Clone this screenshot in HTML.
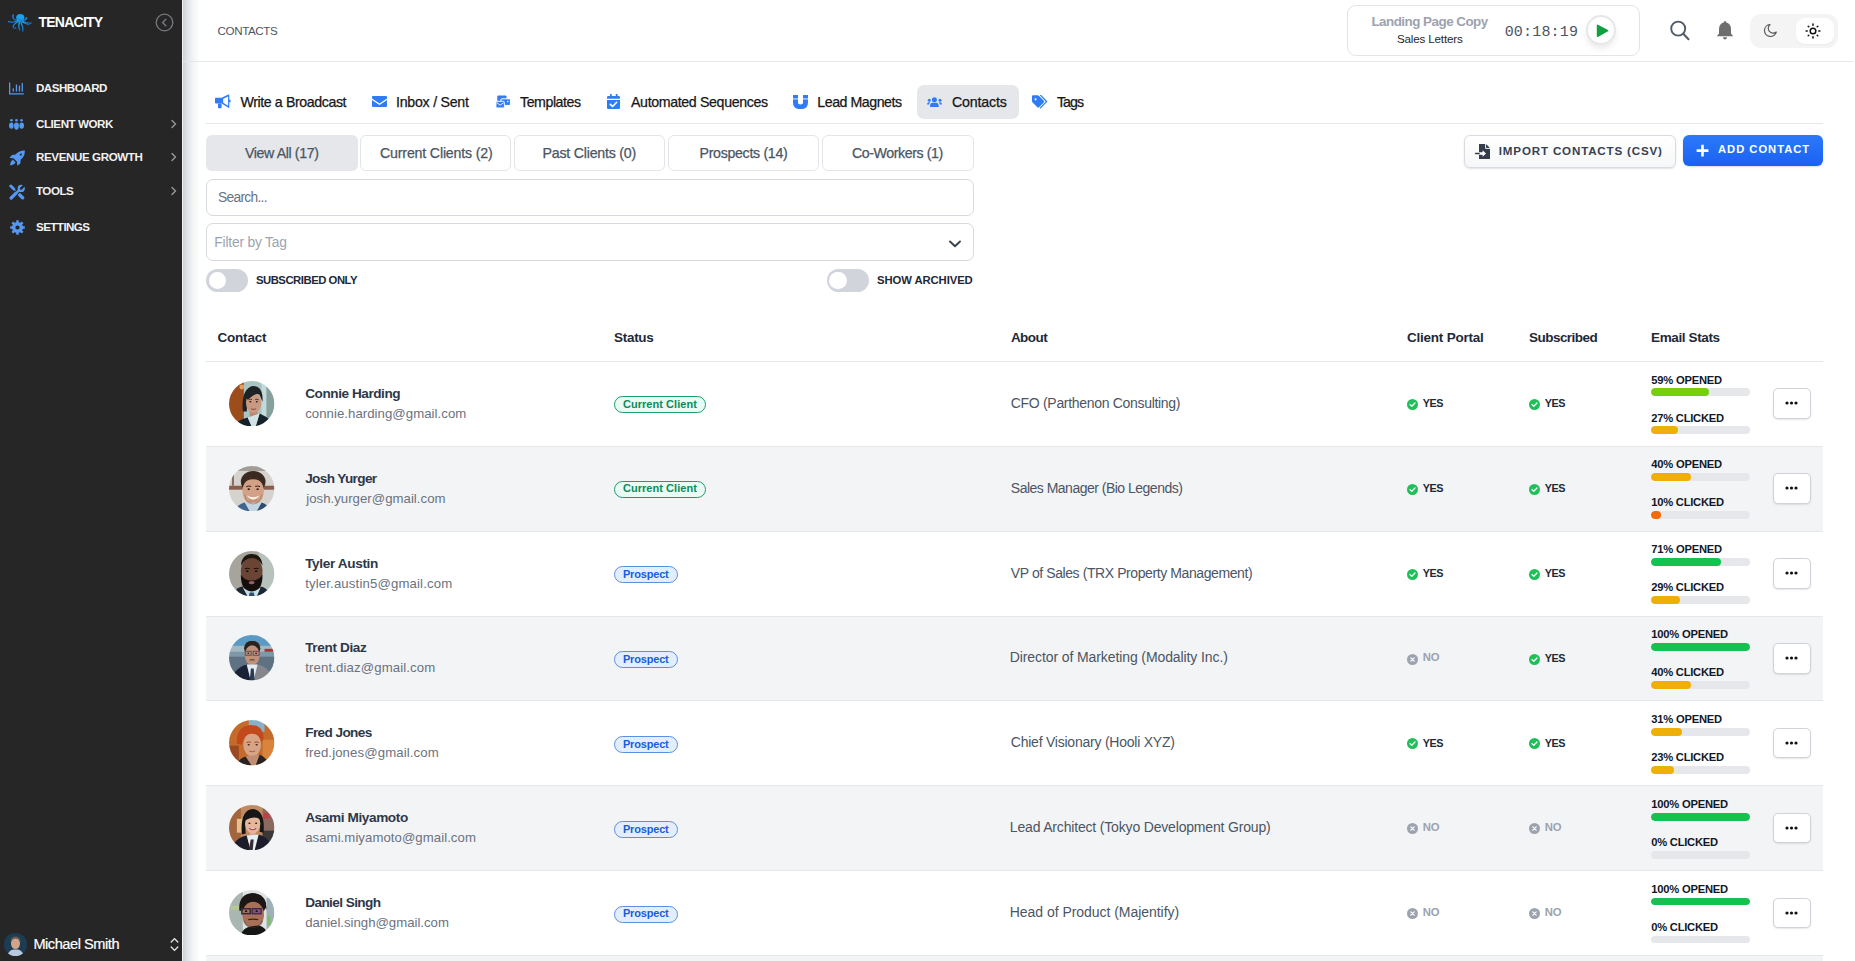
<!DOCTYPE html><html><head><meta charset="utf-8"><style>
*{margin:0;padding:0;box-sizing:border-box}
html,body{width:1855px;height:961px;overflow:hidden;background:#fff;font-family:"Liberation Sans",sans-serif}
.t{position:absolute;white-space:nowrap;line-height:1}
.a{position:absolute}
.av{position:absolute}
svg{display:block}
</style></head><body>
<div class="a" style="left:0;top:0;width:182px;height:961px;background:#262626"></div>
<div class="a" style="left:182px;top:0;width:1px;height:961px;background:#f4f4f4"></div>
<div class="a" style="left:183px;top:0;width:17px;height:961px;background:linear-gradient(90deg,#cdd0d7 0%,#e1e4ea 25%,#f1f3f3 55%,rgba(255,255,255,0) 100%)"></div>
<svg class="a" style="left:8px;top:13.5px" width="24" height="18" viewBox="0 0 24 18"><defs><linearGradient id="og" x1="0" y1="0" x2="0" y2="1"><stop offset="0" stop-color="#22aef5"/><stop offset="1" stop-color="#1668c4"/></linearGradient></defs><g fill="none" stroke="url(#og)" stroke-width="1.25" stroke-linecap="round">
<path d="M10 5.5 Q6.5 7 5.2 4 Q4.6 2 5.2 1"/><path d="M10 6.5 Q5 9.5 0.6 7.6"/><path d="M10.6 7.5 Q6 9.5 5.2 12.5 Q5.5 14.8 7.8 14"/><path d="M11.4 8.5 Q9.8 12.5 11.8 16"/><path d="M13 8.8 Q15.2 12.5 14.8 17.2"/><path d="M14 8 Q18.5 10.2 21 10.6"/><path d="M14.6 6.6 Q17.5 6.6 18.7 3.8"/><path d="M14.8 7.6 Q19.5 9.6 23.2 9.2"/></g>
<ellipse cx="12.3" cy="3.6" rx="4.1" ry="3.5" fill="#18a2ef"/><path d="M9.3 4.8 Q12.3 12 15.3 4.8Z" fill="#1a8fe0"/></svg>
<div class="t" style="left:38.50px;top:14.78px;font-size:14px;font-weight:700;color:#ffffff;letter-spacing:-0.766px;font-family:'Liberation Sans', sans-serif;">TENACITY</div>
<svg class="a" style="left:155px;top:13px" width="19" height="19" viewBox="0 0 19 19"><circle cx="9.5" cy="9.5" r="8.3" fill="none" stroke="#76797e" stroke-width="1.3"/><path d="M10.8 6.2 L7.6 9.5 L10.8 12.8" fill="none" stroke="#76797e" stroke-width="1.4" stroke-linecap="round"/></svg>
<div class="t" style="left:36.00px;top:82.06px;font-size:11.6px;font-weight:700;color:#f2f2f2;letter-spacing:-0.498px;font-family:'Liberation Sans', sans-serif;">DASHBOARD</div>
<div class="t" style="left:36.00px;top:118.06px;font-size:11.6px;font-weight:700;color:#f2f2f2;letter-spacing:-0.442px;font-family:'Liberation Sans', sans-serif;">CLIENT WORK</div>
<svg class="a" style="left:170px;top:119px" width="8" height="10" viewBox="0 0 8 10"><path d="M2 1.5 L5.5 5 L2 8.5" fill="none" stroke="#9a9ca0" stroke-width="1.3" stroke-linecap="round"/></svg>
<div class="t" style="left:36.00px;top:151.06px;font-size:11.6px;font-weight:700;color:#f2f2f2;letter-spacing:-0.400px;font-family:'Liberation Sans', sans-serif;">REVENUE GROWTH</div>
<svg class="a" style="left:170px;top:152px" width="8" height="10" viewBox="0 0 8 10"><path d="M2 1.5 L5.5 5 L2 8.5" fill="none" stroke="#9a9ca0" stroke-width="1.3" stroke-linecap="round"/></svg>
<div class="t" style="left:36.00px;top:185.06px;font-size:11.6px;font-weight:700;color:#f2f2f2;letter-spacing:-0.498px;font-family:'Liberation Sans', sans-serif;">TOOLS</div>
<svg class="a" style="left:170px;top:186px" width="8" height="10" viewBox="0 0 8 10"><path d="M2 1.5 L5.5 5 L2 8.5" fill="none" stroke="#9a9ca0" stroke-width="1.3" stroke-linecap="round"/></svg>
<div class="t" style="left:36.00px;top:221.06px;font-size:11.6px;font-weight:700;color:#f2f2f2;letter-spacing:-0.563px;font-family:'Liberation Sans', sans-serif;">SETTINGS</div>
<svg class="a" style="left:9px;top:82px" width="15" height="13" viewBox="0 0 15 13"><path d="M0.65 0.5 V11.9 H14.8" fill="none" stroke="#5598f2" stroke-width="1.3"/><rect x="3.6" y="6.3" width="1.3" height="3.3" fill="#5598f2"/><rect x="6.8" y="2.5" width="1.3" height="7.1" fill="#5598f2"/><rect x="9.8" y="3.6" width="1.3" height="6" fill="#5598f2"/><rect x="12.6" y="1" width="1.3" height="8.6" fill="#5598f2"/></svg>
<svg class="a" style="left:9px;top:119px" width="15" height="11" viewBox="0 0 15 11"><g fill="#5598f2"><circle cx="2.5" cy="1.3" r="1.3"/><circle cx="7.5" cy="1.3" r="1.3"/><circle cx="12.5" cy="1.3" r="1.3"/><path d="M0 6.5 Q0 3.6 2.5 3.6 Q4.6 3.6 4.6 6.5 Q4.6 9.8 2.5 9.8 Q0 9.8 0 6.5Z"/><path d="M10.4 6.5 Q10.4 3.6 12.5 3.6 Q15 3.6 15 6.5 Q15 9.8 12.5 9.8 Q10.4 9.8 10.4 6.5Z"/><path d="M5.1 6.6 Q5.1 3.6 7.5 3.6 Q9.9 3.6 9.9 6.6 Q9.9 10.8 7.5 10.8 Q5.1 10.8 5.1 6.6Z"/></g></svg>
<svg class="a" style="left:8.5px;top:149.5px" width="16.5" height="16" viewBox="0 0 16 16"><path fill="#5598f2" fill-rule="evenodd" d="M15.6 0.4 Q10 0.2 6.3 4.6 L2.6 4.9 L0.3 8 L4.3 8.3 L7.7 11.7 L8 15.7 L11.1 13.4 L11.4 9.7 Q15.8 6 15.6 0.4Z M11.6 3.4 A1 1 0 1 0 11.601 3.4Z"/><path d="M3.6 9.6 L6.4 12.4 Q5 14.6 2 15.3 L0.7 15.3 Q1.2 11.3 3.6 9.6Z" fill="#5598f2"/></svg>
<svg class="a" style="left:8.5px;top:183.5px" width="16" height="16" viewBox="0 0 16 16"><g fill="none" stroke-linecap="round"><path d="M1.8 2 L4.6 4.8" stroke="#5598f2" stroke-width="3"/><path d="M4.6 4.8 L9.6 9.8" stroke="#5598f2" stroke-width="1.3"/><path d="M10.4 10.6 L13.6 13.8" stroke="#5598f2" stroke-width="3.4"/><path d="M2.2 14 L6.6 9.6 L10.5 5.8" stroke="#262626" stroke-width="4.6"/><path d="M2.2 14 L6.6 9.6" stroke="#5598f2" stroke-width="3.3"/><path d="M6.6 9.6 L10.5 5.8" stroke="#5598f2" stroke-width="2.4"/></g><circle cx="12.2" cy="4.4" r="3.6" fill="#5598f2"/><path d="M12 4.6 L15.5 1.1" stroke="#262626" stroke-width="2.3" stroke-linecap="round"/></svg>
<svg class="a" style="left:9.5px;top:220px" width="15" height="15" viewBox="0 0 15 15"><path fill="#5598f2" fill-rule="evenodd" d="M12.85 6.24 L14.80 6.29 L14.80 8.71 L12.85 8.76 L12.18 10.39 L13.52 11.80 L11.80 13.52 L10.39 12.18 L8.76 12.85 L8.71 14.80 L6.29 14.80 L6.24 12.85 L4.61 12.18 L3.20 13.52 L1.48 11.80 L2.82 10.39 L2.15 8.76 L0.20 8.71 L0.20 6.29 L2.15 6.24 L2.82 4.61 L1.48 3.20 L3.20 1.48 L4.61 2.82 L6.24 2.15 L6.29 0.20 L8.71 0.20 L8.76 2.15 L10.39 2.82 L11.80 1.48 L13.52 3.20 L12.18 4.61Z M9.60 7.50 A2.1 2.1 0 1 0 5.40 7.50 A2.1 2.1 0 1 0 9.60 7.50Z"/></svg>
<svg class="av" style="left:4.00px;top:932.50px" width="23.00" height="23.00" viewBox="0 0 46 46"><defs><clipPath id="cp1"><circle cx="23" cy="23" r="23"/></clipPath><filter id="bl1" x="-5%" y="-5%" width="110%" height="110%"><feGaussianBlur stdDeviation="0.55"/></filter></defs><g clip-path="url(#cp1)"><g filter="url(#bl1)"><rect width="46" height="46" fill="#1c3a55"/><ellipse cx="23" cy="21" rx="9" ry="11" fill="#d2a48a"/><path d="M13 18 Q13 7 23 7 Q33 7 33 18 Q30 11 23 11 Q16 11 13 18Z" fill="#6b5a48"/><path d="M6 46 Q9 35 18 33 L28 33 Q37 35 40 46Z" fill="#b7c9dc"/></g></g></svg>
<div class="t" style="left:33.40px;top:936.69px;font-size:14.6px;font-weight:400;color:#ffffff;letter-spacing:-0.461px;font-family:'Liberation Sans', sans-serif;-webkit-text-stroke:0.2px #fff">Michael Smith</div>
<svg class="a" style="left:170px;top:937px" width="9" height="15" viewBox="0 0 9 15"><path d="M1.2 5 L4.5 1.6 L7.8 5 M1.2 10 L4.5 13.4 L7.8 10" fill="none" stroke="#e8e8e8" stroke-width="1.3" stroke-linecap="round"/></svg>
<div class="a" style="left:183px;top:61px;width:1670px;height:1px;background:#e5e7eb"></div>
<div class="t" style="left:217.60px;top:25.16px;font-size:11.6px;font-weight:400;color:#4b5563;letter-spacing:-0.396px;font-family:'Liberation Sans', sans-serif;">CONTACTS</div>
<div class="a" style="left:1347px;top:5px;width:293px;height:51px;border:1px solid #e2e4e8;border-radius:9px"></div>
<div class="t" style="left:1371.40px;top:15.38px;font-size:13.4px;font-weight:700;color:#9ca3af;letter-spacing:-0.509px;font-family:'Liberation Sans', sans-serif;">Landing Page Copy</div>
<div class="t" style="left:1397.00px;top:33.16px;font-size:11.6px;font-weight:400;color:#1f1f1f;letter-spacing:-0.156px;font-family:'Liberation Sans', sans-serif;">Sales Letters</div>
<div class="t" style="left:1504.70px;top:25.39px;font-size:15px;font-weight:400;color:#4b5563;letter-spacing:0.184px;font-family:'Liberation Mono', monospace;">00:18:19</div>
<div class="a" style="left:1587.6px;top:16.7px;width:26px;height:26px;border-radius:50%;background:#fff;box-shadow:0 0 0 2px #e6e7e9,0 4px 7px 1px rgba(0,0,0,.10)"></div>
<svg class="a" style="left:1595.5px;top:23.5px" width="13" height="14" viewBox="0 0 13 14"><path d="M1.6 1.4 L11.6 6.6 L1.6 12.2Z" fill="#0fa03f" stroke="#0fa03f" stroke-width="1.6" stroke-linejoin="round"/></svg>
<svg class="a" style="left:1668px;top:19px" width="24" height="24" viewBox="0 0 24 24"><circle cx="10.2" cy="9.6" r="7" fill="none" stroke="#525a66" stroke-width="1.9"/><path d="M15.3 14.8 L20.5 20.2" stroke="#525a66" stroke-width="2" stroke-linecap="round"/></svg>
<svg class="a" style="left:1715px;top:20px" width="20" height="21" viewBox="0 0 20 21"><path d="M10 1 Q11 1 11 2.3 Q16 3.5 16 9.5 V13.5 L18.2 16.2 H1.8 L4 13.5 V9.5 Q4 3.5 9 2.3 Q9 1 10 1Z" fill="#6e6e6e"/><path d="M7.8 17.3 H12.2 Q11.5 19.6 10 19.6 Q8.5 19.6 7.8 17.3Z" fill="#6e6e6e"/></svg>
<div class="a" style="left:1750px;top:13.5px;width:88px;height:34px;border-radius:11px;background:#f4f4f4"></div>
<div class="a" style="left:1795.5px;top:17.8px;width:38px;height:26.4px;border-radius:9px;background:#fff;box-shadow:0 1px 2px rgba(0,0,0,.04)"></div>
<svg class="a" style="left:1763px;top:23px" width="15" height="15" viewBox="0 0 15 15"><path d="M7 1.5 A6 6 0 1 0 13.3 9 A4.8 4.8 0 0 1 7 1.5Z" fill="none" stroke="#5a5a5a" stroke-width="1.2" stroke-linejoin="round"/></svg>
<svg class="a" style="left:1804.5px;top:22.6px" width="16" height="16" viewBox="0 0 16 16"><circle cx="8" cy="8" r="2.8" fill="none" stroke="#111" stroke-width="1.5"/><g stroke="#111" stroke-width="1.5" stroke-linecap="round"><path d="M8 1.1V2.2M8 13.8V14.9M1.1 8H2.2M13.8 8H14.9M3.2 3.2L3.8 3.8M12.2 12.2L12.8 12.8M3.2 12.8L3.8 12.2M12.2 3.8L12.8 3.2"/></g></svg>
<div class="a" style="left:917px;top:85.2px;width:101.6px;height:33.6px;border-radius:7px;background:#e5e7eb"></div>
<div class="a" style="left:206px;top:123px;width:1617px;height:1px;background:#e5e7eb"></div>
<div class="t" style="left:240.50px;top:94.95px;font-size:14.2px;font-weight:400;color:#161616;letter-spacing:-0.403px;font-family:'Liberation Sans', sans-serif;-webkit-text-stroke:0.25px #161616">Write a Broadcast</div>
<div class="t" style="left:396.00px;top:94.95px;font-size:14.2px;font-weight:400;color:#161616;letter-spacing:-0.252px;font-family:'Liberation Sans', sans-serif;-webkit-text-stroke:0.25px #161616">Inbox / Sent</div>
<div class="t" style="left:520.00px;top:94.95px;font-size:14.2px;font-weight:400;color:#161616;letter-spacing:-0.446px;font-family:'Liberation Sans', sans-serif;-webkit-text-stroke:0.25px #161616">Templates</div>
<div class="t" style="left:631.00px;top:94.95px;font-size:14.2px;font-weight:400;color:#161616;letter-spacing:-0.359px;font-family:'Liberation Sans', sans-serif;-webkit-text-stroke:0.25px #161616">Automated Sequences</div>
<div class="t" style="left:817.30px;top:94.95px;font-size:14.2px;font-weight:400;color:#161616;letter-spacing:-0.466px;font-family:'Liberation Sans', sans-serif;-webkit-text-stroke:0.25px #161616">Lead Magnets</div>
<div class="t" style="left:952.00px;top:94.95px;font-size:14.2px;font-weight:400;color:#161616;letter-spacing:-0.156px;font-family:'Liberation Sans', sans-serif;-webkit-text-stroke:0.25px #161616">Contacts</div>
<div class="t" style="left:1056.90px;top:94.95px;font-size:14.2px;font-weight:400;color:#161616;letter-spacing:-0.924px;font-family:'Liberation Sans', sans-serif;-webkit-text-stroke:0.25px #161616">Tags</div>
<svg class="a" style="left:214px;top:94px" width="17" height="15" viewBox="0 0 17 15"><path d="M1 4.6 Q1 3.8 1.8 3.8 H8.2 V9.6 H1.8 Q1 9.6 1 8.8Z" fill="#2f7cf5"/><rect x="4" y="9.4" width="3.6" height="4.8" rx="0.7" fill="#2f7cf5"/><path fill="#2f7cf5" fill-rule="evenodd" d="M8 3.6 L14.4 0.6 Q15.3 0.4 15.3 1.3 V13.2 Q15.3 14.1 14.4 13.8 L8 9.8Z M9.2 4.8 V8.8 L14.1 11.8 V2.4Z"/><rect x="15" y="5.6" width="1.6" height="3" rx="0.8" fill="#2f7cf5"/></svg>
<svg class="a" style="left:372px;top:96px" width="15" height="11" viewBox="0 0 15 11"><path d="M0 0.9 Q0 0 0.9 0 H14.1 Q15 0 15 0.9 V2.4 L7.5 7.4 L0 2.4Z" fill="#2f7cf5"/><path d="M0 3.9 L7.5 8.9 L15 3.9 V10.1 Q15 11 14.1 11 H0.9 Q0 11 0 10.1Z" fill="#2f7cf5"/></svg>
<svg class="a" style="left:495.5px;top:95px" width="15" height="13" viewBox="0 0 15 13"><rect x="1.3" y="0.4" width="9.2" height="6" rx="1" fill="#2f7cf5"/><rect x="4.8" y="3.8" width="9.6" height="6.6" rx="1.1" fill="#2f7cf5" stroke="#fff" stroke-width="1"/><circle cx="11.8" cy="6.6" r="0.8" fill="#fff"/><rect x="0" y="6.3" width="8.4" height="6.6" rx="1" fill="#2f7cf5" stroke="#fff" stroke-width="0.9"/><path d="M0.6 7.6 L4.2 10.2 L7.8 7.6" stroke="#fff" stroke-width="0.9" fill="none"/></svg>
<svg class="a" style="left:607px;top:94px" width="14" height="16" viewBox="0 0 14 16"><g fill="#2f7cf5"><rect x="3" y="0" width="1.8" height="3" rx="0.5"/><rect x="8.8" y="0" width="1.8" height="3" rx="0.5"/><path d="M0 3.2 Q0 2 1.2 2 H11.8 Q13 2 13 3.2 V4.8 H0Z"/><path d="M0 6 H13 V13.8 Q13 15 11.8 15 H1.2 Q0 15 0 13.8Z"/></g><path d="M3.4 10.4 L5.6 12.5 L9.7 8.3" fill="none" stroke="#fff" stroke-width="1.6" stroke-linecap="round" stroke-linejoin="round"/></svg>
<svg class="a" style="left:793px;top:94.7px" width="15" height="14.2" viewBox="0 0 15 14.2"><path d="M0 0 H5 V8 Q5 9.4 7.5 9.4 Q10 9.4 10 8 V0 H15 V7.2 Q15 14.2 7.5 14.2 Q0 14.2 0 7.2Z" fill="#2f7cf5"/><rect x="0" y="3.5" width="5" height="0.9" fill="#fff"/><rect x="10" y="3.5" width="5" height="0.9" fill="#fff"/></svg>
<svg class="a" style="left:927px;top:96px" width="15" height="11" viewBox="0 0 15 11"><g fill="#2f7cf5"><circle cx="7.4" cy="3.8" r="2.5"/><circle cx="2.3" cy="4.2" r="1.5"/><circle cx="13" cy="4.2" r="1.5"/><path d="M3 11 Q3 6.8 5.6 6.8 H9.2 Q11.8 6.8 11.8 11Z"/><path d="M0 8.5 Q0 6.2 2 6.2 H3.4 Q2.3 7.3 2.1 8.5Z"/><path d="M15 8.5 Q15 6.2 13 6.2 H11.6 Q12.7 7.3 12.9 8.5Z"/></g></svg>
<svg class="a" style="left:1032px;top:95px" width="15.5" height="13.5" viewBox="0 0 15.5 13.5"><path fill="#2f7cf5" fill-rule="evenodd" d="M0 1.2 Q0 0.2 1 0.2 H5.4 Q6.2 0.2 6.8 0.8 L11.8 5.8 Q12.6 6.6 11.8 7.4 L7 12.3 Q6.2 13.1 5.4 12.3 L0.6 7.5 Q0 6.9 0 6Z M3.6 3.2 A1 1 0 1 0 3.601 3.2Z"/><path d="M8.6 0.4 L14.6 6.6 L8.4 12.9" fill="none" stroke="#2f7cf5" stroke-width="1.3" stroke-linecap="round"/></svg>
<div class="a" style="left:206px;top:135.2px;width:151.5px;height:36.2px;border-radius:6px;background:#e5e7eb"></div>
<div class="t" style="left:245.00px;top:146.15px;font-size:14.2px;font-weight:400;color:#4b5563;letter-spacing:-0.388px;font-family:'Liberation Sans', sans-serif;-webkit-text-stroke:0.25px #4b5563">View All (17)</div>
<div class="a" style="left:360.4px;top:135.2px;width:150.90000000000003px;height:36.2px;border-radius:6px;border:1px solid #e3e5e9;background:#fff"></div>
<div class="t" style="left:380.00px;top:146.15px;font-size:14.2px;font-weight:400;color:#4b5563;letter-spacing:-0.176px;font-family:'Liberation Sans', sans-serif;-webkit-text-stroke:0.25px #4b5563">Current Clients (2)</div>
<div class="a" style="left:514px;top:135.2px;width:151px;height:36.2px;border-radius:6px;border:1px solid #e3e5e9;background:#fff"></div>
<div class="t" style="left:542.50px;top:146.15px;font-size:14.2px;font-weight:400;color:#4b5563;letter-spacing:-0.217px;font-family:'Liberation Sans', sans-serif;-webkit-text-stroke:0.25px #4b5563">Past Clients (0)</div>
<div class="a" style="left:668px;top:135.2px;width:151px;height:36.2px;border-radius:6px;border:1px solid #e3e5e9;background:#fff"></div>
<div class="t" style="left:699.50px;top:146.15px;font-size:14.2px;font-weight:400;color:#4b5563;letter-spacing:-0.310px;font-family:'Liberation Sans', sans-serif;-webkit-text-stroke:0.25px #4b5563">Prospects (14)</div>
<div class="a" style="left:822px;top:135.2px;width:151.5px;height:36.2px;border-radius:6px;border:1px solid #e3e5e9;background:#fff"></div>
<div class="t" style="left:852.00px;top:146.15px;font-size:14.2px;font-weight:400;color:#4b5563;letter-spacing:-0.421px;font-family:'Liberation Sans', sans-serif;-webkit-text-stroke:0.25px #4b5563">Co-Workers (1)</div>
<div class="a" style="left:206px;top:179.2px;width:767.5px;height:36.4px;border-radius:7px;border:1px solid #d6d9de"></div>
<div class="t" style="left:218.00px;top:191.01px;font-size:13.8px;font-weight:400;color:#6b7280;letter-spacing:-0.710px;font-family:'Liberation Sans', sans-serif;">Search...</div>
<div class="a" style="left:206px;top:223.4px;width:767.5px;height:38.1px;border-radius:7px;border:1px solid #d6d9de"></div>
<div class="t" style="left:214.30px;top:235.61px;font-size:13.8px;font-weight:400;color:#9ca3af;letter-spacing:-0.189px;font-family:'Liberation Sans', sans-serif;">Filter by Tag</div>
<svg class="a" style="left:948px;top:238.5px" width="14" height="10" viewBox="0 0 14 10"><path d="M2 2.5 L7 7.3 L12 2.5" fill="none" stroke="#374151" stroke-width="1.9" stroke-linecap="round" stroke-linejoin="round"/></svg>
<div class="a" style="left:206.2px;top:269.3px;width:41.7px;height:22.3px;border-radius:12px;background:#d1d5db"></div>
<div class="a" style="left:208.5px;top:271.7px;width:17.5px;height:17.5px;border-radius:50%;background:#fff"></div>
<div class="t" style="left:255.90px;top:275.31px;font-size:11.3px;font-weight:700;color:#1f2937;letter-spacing:-0.467px;font-family:'Liberation Sans', sans-serif;">SUBSCRIBED ONLY</div>
<div class="a" style="left:827px;top:269.3px;width:41.7px;height:22.3px;border-radius:12px;background:#d1d5db"></div>
<div class="a" style="left:829.3px;top:271.7px;width:17.5px;height:17.5px;border-radius:50%;background:#fff"></div>
<div class="t" style="left:877.00px;top:275.31px;font-size:11.3px;font-weight:700;color:#1f2937;letter-spacing:-0.094px;font-family:'Liberation Sans', sans-serif;">SHOW ARCHIVED</div>
<div class="a" style="left:1463.5px;top:135px;width:212px;height:32.5px;border-radius:6px;border:1px solid #d9dbe0;background:linear-gradient(#fff,#f6f7f8);box-shadow:0 1px 2px rgba(0,0,0,.12)"></div>
<svg class="a" style="left:1474px;top:143px" width="17" height="17" viewBox="0 0 17 17"><path d="M5 1.3 Q5 1 5.3 1 H11.8 L16 5.2 V15.7 Q16 16 15.7 16 H5.3 Q5 16 5 15.7Z" fill="#353c4a"/><path d="M11.6 0.5 V5.4 H16.5" fill="none" stroke="#f6f7f8" stroke-width="1"/><path d="M12.4 1.6 L15.4 4.6 H12.4Z" fill="#353c4a"/><path d="M5 9.3 H8.6 V7.2 L12 10.5 L8.6 13.8 V11.7 H5Z" fill="#fff"/><path d="M1.6 10.5 H5" stroke="#353c4a" stroke-width="1.6" stroke-linecap="round"/></svg>
<div class="t" style="left:1498.80px;top:144.66px;font-size:11.6px;font-weight:700;color:#374151;letter-spacing:0.826px;font-family:'Liberation Sans', sans-serif;">IMPORT CONTACTS (CSV)</div>
<div class="a" style="left:1683px;top:135px;width:140px;height:31px;border-radius:6px;background:linear-gradient(#2b7afa,#1b61f2);box-shadow:0 1px 2px rgba(0,0,0,.15)"></div>
<svg class="a" style="left:1695px;top:143px" width="15" height="15" viewBox="0 0 15 15"><path d="M7.5 1.8 V13.6 M1.6 7.6 H13.4" stroke="#fff" stroke-width="2.6" stroke-linecap="butt"/></svg>
<div class="t" style="left:1718.00px;top:144.42px;font-size:11.2px;font-weight:700;color:#ffffff;letter-spacing:0.993px;font-family:'Liberation Sans', sans-serif;">ADD CONTACT</div>
<div class="t" style="left:217.50px;top:331.16px;font-size:13.5px;font-weight:700;color:#1f2937;letter-spacing:-0.209px;font-family:'Liberation Sans', sans-serif;">Contact</div>
<div class="t" style="left:614.00px;top:331.16px;font-size:13.5px;font-weight:700;color:#1f2937;letter-spacing:-0.290px;font-family:'Liberation Sans', sans-serif;">Status</div>
<div class="t" style="left:1010.90px;top:331.16px;font-size:13.5px;font-weight:700;color:#1f2937;letter-spacing:-0.522px;font-family:'Liberation Sans', sans-serif;">About</div>
<div class="t" style="left:1407.00px;top:331.16px;font-size:13.5px;font-weight:700;color:#1f2937;letter-spacing:-0.230px;font-family:'Liberation Sans', sans-serif;">Client Portal</div>
<div class="t" style="left:1529.00px;top:331.16px;font-size:13.5px;font-weight:700;color:#1f2937;letter-spacing:-0.530px;font-family:'Liberation Sans', sans-serif;">Subscribed</div>
<div class="t" style="left:1651.00px;top:331.16px;font-size:13.5px;font-weight:700;color:#1f2937;letter-spacing:-0.377px;font-family:'Liberation Sans', sans-serif;">Email Stats</div>
<div class="a" style="left:206px;top:361px;width:1617px;height:1px;background:#e5e7eb"></div>
<div class="a" style="left:206px;top:445.86px;width:1617px;height:1px;background:#e5e7eb"></div>
<svg class="av" style="left:229.40px;top:380.80px" width="45.40" height="45.40" viewBox="0 0 46 46"><defs><clipPath id="cp2"><circle cx="23" cy="23" r="23"/></clipPath><filter id="bl2" x="-5%" y="-5%" width="110%" height="110%"><feGaussianBlur stdDeviation="0.55"/></filter></defs><g clip-path="url(#cp2)"><g filter="url(#bl2)"><rect width="46" height="46" fill="#a9c4c2"/><rect x="33" width="5" height="46" fill="#c3dada"/><rect x="38" width="8" height="46" fill="#86a19d"/><rect width="15" height="46" fill="#9c4e1c"/><circle cx="13" cy="6" r="2.5" fill="#e0a060"/><path d="M14 31 Q12 8 24 5 Q35 5 34 21 L31 14 Q25 11 19 17 L18 31Z" fill="#1e2126"/><rect x="21" y="29" width="8" height="9" fill="#b98a74"/><ellipse cx="25" cy="22" rx="7.8" ry="10.5" fill="#c99a82"/><path d="M17 17 Q22 8 32 13 Q28 11 19 19Z" fill="#1e2126"/><path d="M6 46 L9 41 Q14 38 19 37 L23 46Z" fill="#18212c"/><path d="M27 46 L31 33 Q38 36 42 40 L45 46Z" fill="#18212c"/><path d="M19 37 L31 33 L27 46 L23 46Z" fill="#d0e4e6"/><g fill="#2a1a18"><ellipse cx="21.6" cy="21" rx="1.1" ry="0.8"/><ellipse cx="28.2" cy="21" rx="1.1" ry="0.8"/></g><path d="M19.8 19 Q21.6 18 23.3 18.8 M26.6 18.8 Q28.3 18 30 19" stroke="#2a1a18" stroke-width="0.8" fill="none"/><path d="M22.5 28 Q25 29.6 27.5 28" stroke="#9a4e46" stroke-width="1.1" fill="none"/></g></g></svg>
<div class="t" style="left:305.20px;top:386.84px;font-size:13.6px;font-weight:700;color:#2d3748;letter-spacing:-0.446px;font-family:'Liberation Sans', sans-serif;">Connie Harding</div>
<div class="t" style="left:305.20px;top:406.91px;font-size:13.2px;font-weight:400;color:#6b7280;letter-spacing:0.047px;font-family:'Liberation Sans', sans-serif;">connie.harding@gmail.com</div>
<div class="a" style="left:614px;top:396.45px;width:92px;height:17px;border-radius:9px;border:1.3px solid #1a9e6a;background:#e9fbf3"></div>
<div class="t" style="left:622.90px;top:398.56px;font-size:11px;font-weight:700;color:#0e8a5c;letter-spacing:0.056px;font-family:'Liberation Sans', sans-serif;">Current Client</div>
<div class="t" style="left:1010.80px;top:395.88px;font-size:14px;font-weight:400;color:#4b5563;letter-spacing:-0.310px;font-family:'Liberation Sans', sans-serif;">CFO (Parthenon Consulting)</div>
<svg class="a" style="left:1407px;top:398.95px" width="11" height="11" viewBox="0 0 11 11"><circle cx="5.5" cy="5.5" r="5.5" fill="#1fbf5a"/><path d="M3 5.6 L4.8 7.3 L8 4" fill="none" stroke="#fff" stroke-width="1.3" stroke-linecap="round" stroke-linejoin="round"/></svg>
<div class="t" style="left:1422.80px;top:398.09px;font-size:10.8px;font-weight:700;color:#1f2937;letter-spacing:-0.501px;font-family:'Liberation Sans', sans-serif;">YES</div>
<svg class="a" style="left:1529px;top:398.95px" width="11" height="11" viewBox="0 0 11 11"><circle cx="5.5" cy="5.5" r="5.5" fill="#1fbf5a"/><path d="M3 5.6 L4.8 7.3 L8 4" fill="none" stroke="#fff" stroke-width="1.3" stroke-linecap="round" stroke-linejoin="round"/></svg>
<div class="t" style="left:1544.80px;top:398.09px;font-size:10.8px;font-weight:700;color:#1f2937;letter-spacing:-0.501px;font-family:'Liberation Sans', sans-serif;">YES</div>
<div class="t" style="left:1651.30px;top:374.52px;font-size:11.2px;font-weight:700;color:#111827;letter-spacing:-0.219px;font-family:'Liberation Sans', sans-serif;">59% OPENED</div>
<div class="a" style="left:1651px;top:388.45px;width:99px;height:7.8px;border-radius:4px;background:#e5e7eb;overflow:hidden"><div style="width:59%;height:100%;border-radius:4px;background:#76cf0a"></div></div>
<div class="t" style="left:1651.30px;top:412.62px;font-size:11.2px;font-weight:700;color:#111827;letter-spacing:-0.244px;font-family:'Liberation Sans', sans-serif;">27% CLICKED</div>
<div class="a" style="left:1651px;top:426.45px;width:99px;height:7.8px;border-radius:4px;background:#e5e7eb;overflow:hidden"><div style="width:27%;height:100%;border-radius:4px;background:#eeb007"></div></div>
<div class="a" style="left:1773px;top:388.45px;width:37.5px;height:30.5px;border-radius:5px;border:1px solid #cfd3d9;background:#fff;box-shadow:0 1px 2px rgba(0,0,0,.1)"></div>
<svg class="a" style="left:1785px;top:401.45px" width="13" height="4" viewBox="0 0 13 4"><circle cx="2" cy="2" r="1.6" fill="#111"/><circle cx="6.5" cy="2" r="1.6" fill="#111"/><circle cx="11" cy="2" r="1.6" fill="#111"/></svg>
<div class="a" style="left:206px;top:446.86px;width:1617px;height:84.86px;background:#f3f4f6"></div>
<div class="a" style="left:206px;top:530.71px;width:1617px;height:1px;background:#e5e7eb"></div>
<svg class="av" style="left:229.40px;top:465.66px" width="45.40" height="45.40" viewBox="0 0 46 46"><defs><clipPath id="cp3"><circle cx="23" cy="23" r="23"/></clipPath><filter id="bl3" x="-5%" y="-5%" width="110%" height="110%"><feGaussianBlur stdDeviation="0.55"/></filter></defs><g clip-path="url(#cp3)"><g filter="url(#bl3)"><rect width="46" height="46" fill="#d6d3ce"/><rect width="46" height="5" fill="#a39c96"/><rect y="20" width="46" height="4" fill="#8a5d4c"/><rect x="3" y="5" width="2" height="15" fill="#8a6a5a"/><ellipse cx="24.5" cy="16" rx="12.5" ry="11" fill="#3a2b23"/><ellipse cx="24.5" cy="25.5" rx="10.8" ry="13.5" fill="#d3a286"/><path d="M13.8 19 Q13.5 8 24.5 7.5 Q35.5 8 35.2 19 Q31 13.5 24.5 13.5 Q18 13.5 13.8 19Z" fill="#3a2b23"/><path d="M5 46 Q8 39 16 37 L23 46Z" fill="#3f6590"/><path d="M33 37 Q40 39 42 46 L27 46Z" fill="#2f4c70"/><path d="M16 37 L33 37 L28 46 L21 46Z" fill="#c3d4e2"/><path d="M20 33 Q24.5 36 29 33 L29 37 L20 37Z" fill="#c48f76"/><g fill="#2a1a14"><ellipse cx="20" cy="23.5" rx="1.2" ry="0.9"/><ellipse cx="29" cy="23.5" rx="1.2" ry="0.9"/></g><path d="M17.5 21 Q20 19.8 22.5 20.8 M26.5 20.8 Q29 19.8 31.5 21" stroke="#3a2a22" stroke-width="1.1" fill="none"/><path d="M18 30 Q24.5 38 31 30 Q24.5 33.5 18 30Z" fill="#fff" opacity=".85"/><path d="M16 29 Q17 37.5 24.5 38.5 Q32 37.5 33 29" stroke="#9a7a66" stroke-width="1.2" fill="none" opacity=".6"/></g></g></svg>
<div class="t" style="left:305.20px;top:471.70px;font-size:13.6px;font-weight:700;color:#2d3748;letter-spacing:-0.638px;font-family:'Liberation Sans', sans-serif;">Josh Yurger</div>
<div class="t" style="left:306.20px;top:491.76px;font-size:13.2px;font-weight:400;color:#6b7280;letter-spacing:0.029px;font-family:'Liberation Sans', sans-serif;">josh.yurger@gmail.com</div>
<div class="a" style="left:614px;top:481.31px;width:92px;height:17px;border-radius:9px;border:1.3px solid #1a9e6a;background:#e9fbf3"></div>
<div class="t" style="left:622.90px;top:483.41px;font-size:11px;font-weight:700;color:#0e8a5c;letter-spacing:0.056px;font-family:'Liberation Sans', sans-serif;">Current Client</div>
<div class="t" style="left:1010.80px;top:480.74px;font-size:14px;font-weight:400;color:#4b5563;letter-spacing:-0.506px;font-family:'Liberation Sans', sans-serif;">Sales Manager (Bio Legends)</div>
<svg class="a" style="left:1407px;top:483.81px" width="11" height="11" viewBox="0 0 11 11"><circle cx="5.5" cy="5.5" r="5.5" fill="#1fbf5a"/><path d="M3 5.6 L4.8 7.3 L8 4" fill="none" stroke="#fff" stroke-width="1.3" stroke-linecap="round" stroke-linejoin="round"/></svg>
<div class="t" style="left:1422.80px;top:482.95px;font-size:10.8px;font-weight:700;color:#1f2937;letter-spacing:-0.501px;font-family:'Liberation Sans', sans-serif;">YES</div>
<svg class="a" style="left:1529px;top:483.81px" width="11" height="11" viewBox="0 0 11 11"><circle cx="5.5" cy="5.5" r="5.5" fill="#1fbf5a"/><path d="M3 5.6 L4.8 7.3 L8 4" fill="none" stroke="#fff" stroke-width="1.3" stroke-linecap="round" stroke-linejoin="round"/></svg>
<div class="t" style="left:1544.80px;top:482.95px;font-size:10.8px;font-weight:700;color:#1f2937;letter-spacing:-0.501px;font-family:'Liberation Sans', sans-serif;">YES</div>
<div class="t" style="left:1651.30px;top:459.38px;font-size:11.2px;font-weight:700;color:#111827;letter-spacing:-0.219px;font-family:'Liberation Sans', sans-serif;">40% OPENED</div>
<div class="a" style="left:1651px;top:473.31px;width:99px;height:7.8px;border-radius:4px;background:#e5e7eb;overflow:hidden"><div style="width:40%;height:100%;border-radius:4px;background:#eeb007"></div></div>
<div class="t" style="left:1651.30px;top:497.48px;font-size:11.2px;font-weight:700;color:#111827;letter-spacing:-0.244px;font-family:'Liberation Sans', sans-serif;">10% CLICKED</div>
<div class="a" style="left:1651px;top:511.31px;width:99px;height:7.8px;border-radius:4px;background:#e5e7eb;overflow:hidden"><div style="width:10%;height:100%;border-radius:4px;background:#f26a0a"></div></div>
<div class="a" style="left:1773px;top:473.31px;width:37.5px;height:30.5px;border-radius:5px;border:1px solid #cfd3d9;background:#fff;box-shadow:0 1px 2px rgba(0,0,0,.1)"></div>
<svg class="a" style="left:1785px;top:486.31px" width="13" height="4" viewBox="0 0 13 4"><circle cx="2" cy="2" r="1.6" fill="#111"/><circle cx="6.5" cy="2" r="1.6" fill="#111"/><circle cx="11" cy="2" r="1.6" fill="#111"/></svg>
<div class="a" style="left:206px;top:615.57px;width:1617px;height:1px;background:#e5e7eb"></div>
<svg class="av" style="left:229.40px;top:550.51px" width="45.40" height="45.40" viewBox="0 0 46 46"><defs><clipPath id="cp4"><circle cx="23" cy="23" r="23"/></clipPath><filter id="bl4" x="-5%" y="-5%" width="110%" height="110%"><feGaussianBlur stdDeviation="0.55"/></filter></defs><g clip-path="url(#cp4)"><g filter="url(#bl4)"><rect width="46" height="46" fill="#a6a49d"/><rect x="30" width="16" height="46" fill="#b7c2bd"/><ellipse cx="23" cy="21" rx="11" ry="15" fill="#6a4535"/><path d="M12 15 Q13 3 23 3 Q33 3 34 15 Q30 7 23 7 Q16 7 12 15Z" fill="#1a1310"/><path d="M12 24 Q12 41 23 42 Q34 41 34 24 Q30 30 23 30 Q16 30 12 24Z" fill="#17110f"/><ellipse cx="23" cy="32" rx="3" ry="1.6" fill="#9a6068"/><path d="M5 46 L8 38 Q12 36 14 36 L19 46Z" fill="#1d2634"/><path d="M32 36 Q38 37 40 42 L42 46 L28 46Z" fill="#1d2634"/><path d="M14 37 L17 39 Q23 43 29 39 L32 37 L28 46 L19 46Z" fill="#c5dde8"/><path d="M21 42 L25 42 L26 46 L20 46Z" fill="#2d4b6a"/><g fill="#150d0a"><ellipse cx="18.5" cy="20.5" rx="1.3" ry="0.9"/><ellipse cx="27.5" cy="20.5" rx="1.3" ry="0.9"/></g><path d="M16 18 Q18.5 17 21 18 M25 18 Q27.5 17 30 18" stroke="#150d0a" stroke-width="1" fill="none"/></g></g></svg>
<div class="t" style="left:305.20px;top:556.56px;font-size:13.6px;font-weight:700;color:#2d3748;letter-spacing:-0.358px;font-family:'Liberation Sans', sans-serif;">Tyler Austin</div>
<div class="t" style="left:305.20px;top:576.62px;font-size:13.2px;font-weight:400;color:#6b7280;letter-spacing:0.142px;font-family:'Liberation Sans', sans-serif;">tyler.austin5@gmail.com</div>
<div class="a" style="left:614px;top:566.16px;width:64px;height:17px;border-radius:9px;border:1.3px solid #5d8fe0;background:#e3eefc"></div>
<div class="t" style="left:622.90px;top:568.97px;font-size:11px;font-weight:700;color:#1a5ce0;letter-spacing:-0.173px;font-family:'Liberation Sans', sans-serif;">Prospect</div>
<div class="t" style="left:1010.80px;top:565.59px;font-size:14px;font-weight:400;color:#4b5563;letter-spacing:-0.409px;font-family:'Liberation Sans', sans-serif;">VP of Sales (TRX Property Management)</div>
<svg class="a" style="left:1407px;top:568.66px" width="11" height="11" viewBox="0 0 11 11"><circle cx="5.5" cy="5.5" r="5.5" fill="#1fbf5a"/><path d="M3 5.6 L4.8 7.3 L8 4" fill="none" stroke="#fff" stroke-width="1.3" stroke-linecap="round" stroke-linejoin="round"/></svg>
<div class="t" style="left:1422.80px;top:567.80px;font-size:10.8px;font-weight:700;color:#1f2937;letter-spacing:-0.501px;font-family:'Liberation Sans', sans-serif;">YES</div>
<svg class="a" style="left:1529px;top:568.66px" width="11" height="11" viewBox="0 0 11 11"><circle cx="5.5" cy="5.5" r="5.5" fill="#1fbf5a"/><path d="M3 5.6 L4.8 7.3 L8 4" fill="none" stroke="#fff" stroke-width="1.3" stroke-linecap="round" stroke-linejoin="round"/></svg>
<div class="t" style="left:1544.80px;top:567.80px;font-size:10.8px;font-weight:700;color:#1f2937;letter-spacing:-0.501px;font-family:'Liberation Sans', sans-serif;">YES</div>
<div class="t" style="left:1651.30px;top:544.24px;font-size:11.2px;font-weight:700;color:#111827;letter-spacing:-0.219px;font-family:'Liberation Sans', sans-serif;">71% OPENED</div>
<div class="a" style="left:1651px;top:558.16px;width:99px;height:7.8px;border-radius:4px;background:#e5e7eb;overflow:hidden"><div style="width:71%;height:100%;border-radius:4px;background:#16c24f"></div></div>
<div class="t" style="left:1651.30px;top:582.34px;font-size:11.2px;font-weight:700;color:#111827;letter-spacing:-0.244px;font-family:'Liberation Sans', sans-serif;">29% CLICKED</div>
<div class="a" style="left:1651px;top:596.16px;width:99px;height:7.8px;border-radius:4px;background:#e5e7eb;overflow:hidden"><div style="width:29%;height:100%;border-radius:4px;background:#eeb007"></div></div>
<div class="a" style="left:1773px;top:558.16px;width:37.5px;height:30.5px;border-radius:5px;border:1px solid #cfd3d9;background:#fff;box-shadow:0 1px 2px rgba(0,0,0,.1)"></div>
<svg class="a" style="left:1785px;top:571.16px" width="13" height="4" viewBox="0 0 13 4"><circle cx="2" cy="2" r="1.6" fill="#111"/><circle cx="6.5" cy="2" r="1.6" fill="#111"/><circle cx="11" cy="2" r="1.6" fill="#111"/></svg>
<div class="a" style="left:206px;top:616.57px;width:1617px;height:84.86px;background:#f3f4f6"></div>
<div class="a" style="left:206px;top:700.43px;width:1617px;height:1px;background:#e5e7eb"></div>
<svg class="av" style="left:229.40px;top:635.37px" width="45.40" height="45.40" viewBox="0 0 46 46"><defs><clipPath id="cp5"><circle cx="23" cy="23" r="23"/></clipPath><filter id="bl5" x="-5%" y="-5%" width="110%" height="110%"><feGaussianBlur stdDeviation="0.55"/></filter></defs><g clip-path="url(#cp5)"><g filter="url(#bl5)"><rect width="46" height="46" fill="#7f98a9"/><rect width="46" height="11" fill="#5a9ac5"/><rect y="11" width="46" height="6" fill="#a4b8c4"/><rect x="36" y="14" width="9" height="3" fill="#b03030"/><rect y="22" width="46" height="24" fill="#5f7283"/><rect x="20" y="25" width="6" height="7" fill="#a87a62"/><ellipse cx="23.5" cy="13.5" rx="8.2" ry="7.5" fill="#2b231e"/><ellipse cx="23.5" cy="20.5" rx="7.6" ry="10" fill="#c0917a"/><path d="M15.5 15 Q15 6 23.5 6 Q32 6 31.5 15 L30 11 Q23.5 8.5 17 11Z" fill="#2b231e"/><g fill="none" stroke="#5c5050" stroke-width="1"><rect x="16.5" y="16.5" width="6" height="4"/><rect x="24.5" y="16.5" width="6" height="4"/></g><path d="M4 40 Q10 32 18 30 L22 46 L6 46Z" fill="#1c2436"/><path d="M29 30 Q38 32 43 40 L40 46 L25 46Z" fill="#86868c"/><path d="M18 30 L29 30 L25 46 L22 46Z" fill="#e4ecf3"/><path d="M22.2 34 L25 34 L26 46 L21 46Z" fill="#2a3a55"/><g fill="#2a1e1a"><ellipse cx="19.5" cy="18.5" rx="1" ry="0.7"/><ellipse cx="27.5" cy="18.5" rx="1" ry="0.7"/></g><path d="M21 25.5 Q23.5 24.5 26 25.5" stroke="#6a4a3e" stroke-width="1.2" fill="none"/></g></g></svg>
<div class="t" style="left:305.20px;top:641.42px;font-size:13.6px;font-weight:700;color:#2d3748;letter-spacing:-0.374px;font-family:'Liberation Sans', sans-serif;">Trent Diaz</div>
<div class="t" style="left:305.20px;top:661.48px;font-size:13.2px;font-weight:400;color:#6b7280;letter-spacing:0.124px;font-family:'Liberation Sans', sans-serif;">trent.diaz@gmail.com</div>
<div class="a" style="left:614px;top:651.02px;width:64px;height:17px;border-radius:9px;border:1.3px solid #5d8fe0;background:#e3eefc"></div>
<div class="t" style="left:622.90px;top:653.83px;font-size:11px;font-weight:700;color:#1a5ce0;letter-spacing:-0.173px;font-family:'Liberation Sans', sans-serif;">Prospect</div>
<div class="t" style="left:1009.80px;top:650.45px;font-size:14px;font-weight:400;color:#4b5563;letter-spacing:-0.102px;font-family:'Liberation Sans', sans-serif;">Director of Marketing (Modality Inc.)</div>
<svg class="a" style="left:1407px;top:653.52px" width="11" height="11" viewBox="0 0 11 11"><circle cx="5.5" cy="5.5" r="5.5" fill="#9ca3af"/><path d="M3.8 3.8 L7.2 7.2 M7.2 3.8 L3.8 7.2" fill="none" stroke="#fff" stroke-width="1.2" stroke-linecap="round"/></svg>
<div class="t" style="left:1422.80px;top:652.38px;font-size:11.3px;font-weight:700;color:#9ca3af;letter-spacing:-0.158px;font-family:'Liberation Sans', sans-serif;">NO</div>
<svg class="a" style="left:1529px;top:653.52px" width="11" height="11" viewBox="0 0 11 11"><circle cx="5.5" cy="5.5" r="5.5" fill="#1fbf5a"/><path d="M3 5.6 L4.8 7.3 L8 4" fill="none" stroke="#fff" stroke-width="1.3" stroke-linecap="round" stroke-linejoin="round"/></svg>
<div class="t" style="left:1544.80px;top:652.66px;font-size:10.8px;font-weight:700;color:#1f2937;letter-spacing:-0.501px;font-family:'Liberation Sans', sans-serif;">YES</div>
<div class="t" style="left:1651.30px;top:629.10px;font-size:11.2px;font-weight:700;color:#111827;letter-spacing:-0.214px;font-family:'Liberation Sans', sans-serif;">100% OPENED</div>
<div class="a" style="left:1651px;top:643.02px;width:99px;height:7.8px;border-radius:4px;background:#e5e7eb;overflow:hidden"><div style="width:100%;height:100%;border-radius:4px;background:#16c24f"></div></div>
<div class="t" style="left:1651.30px;top:667.20px;font-size:11.2px;font-weight:700;color:#111827;letter-spacing:-0.244px;font-family:'Liberation Sans', sans-serif;">40% CLICKED</div>
<div class="a" style="left:1651px;top:681.02px;width:99px;height:7.8px;border-radius:4px;background:#e5e7eb;overflow:hidden"><div style="width:40%;height:100%;border-radius:4px;background:#eeb007"></div></div>
<div class="a" style="left:1773px;top:643.02px;width:37.5px;height:30.5px;border-radius:5px;border:1px solid #cfd3d9;background:#fff;box-shadow:0 1px 2px rgba(0,0,0,.1)"></div>
<svg class="a" style="left:1785px;top:656.02px" width="13" height="4" viewBox="0 0 13 4"><circle cx="2" cy="2" r="1.6" fill="#111"/><circle cx="6.5" cy="2" r="1.6" fill="#111"/><circle cx="11" cy="2" r="1.6" fill="#111"/></svg>
<div class="a" style="left:206px;top:785.28px;width:1617px;height:1px;background:#e5e7eb"></div>
<svg class="av" style="left:229.40px;top:720.23px" width="45.40" height="45.40" viewBox="0 0 46 46"><defs><clipPath id="cp6"><circle cx="23" cy="23" r="23"/></clipPath><filter id="bl6" x="-5%" y="-5%" width="110%" height="110%"><feGaussianBlur stdDeviation="0.55"/></filter></defs><g clip-path="url(#cp6)"><g filter="url(#bl6)"><rect width="46" height="46" fill="#c46a2c"/><rect x="20" width="16" height="12" fill="#8ab0c8"/><rect x="34" y="20" width="12" height="20" fill="#d8843a"/><rect y="26" width="10" height="20" fill="#9a4a20"/><ellipse cx="23.5" cy="25" rx="9" ry="12" fill="#d8a486"/><path d="M8 24 Q7 6 22 5 Q35 5 35 19 L33 23 Q31 13 22 14 Q15 15 13 25Z" fill="#c2491c"/><path d="M7 46 Q11 38 17 37 L23 46Z" fill="#2a2420"/><path d="M31 35 Q38 38 41 46 L25 46Z" fill="#2a2420"/><path d="M17 37 L31 35 L27 46 L23 46Z" fill="#c08e74"/><g fill="#3a2418"><ellipse cx="20" cy="25" rx="1.2" ry="0.8"/><ellipse cx="28" cy="25" rx="1.2" ry="0.8"/></g><path d="M17.8 22.8 Q20 21.8 22.2 22.6 M25.8 22.6 Q28 21.8 30.2 22.8" stroke="#a8441c" stroke-width="1" fill="none"/><path d="M20.5 31.5 Q23.5 32.8 26.5 31.5" stroke="#a0604c" stroke-width="1" fill="none"/></g></g></svg>
<div class="t" style="left:305.20px;top:726.27px;font-size:13.6px;font-weight:700;color:#2d3748;letter-spacing:-0.596px;font-family:'Liberation Sans', sans-serif;">Fred Jones</div>
<div class="t" style="left:305.20px;top:746.34px;font-size:13.2px;font-weight:400;color:#6b7280;letter-spacing:0.110px;font-family:'Liberation Sans', sans-serif;">fred.jones@gmail.com</div>
<div class="a" style="left:614px;top:735.88px;width:64px;height:17px;border-radius:9px;border:1.3px solid #5d8fe0;background:#e3eefc"></div>
<div class="t" style="left:622.90px;top:738.68px;font-size:11px;font-weight:700;color:#1a5ce0;letter-spacing:-0.173px;font-family:'Liberation Sans', sans-serif;">Prospect</div>
<div class="t" style="left:1010.80px;top:735.31px;font-size:14px;font-weight:400;color:#4b5563;letter-spacing:-0.230px;font-family:'Liberation Sans', sans-serif;">Chief Visionary (Hooli XYZ)</div>
<svg class="a" style="left:1407px;top:738.38px" width="11" height="11" viewBox="0 0 11 11"><circle cx="5.5" cy="5.5" r="5.5" fill="#1fbf5a"/><path d="M3 5.6 L4.8 7.3 L8 4" fill="none" stroke="#fff" stroke-width="1.3" stroke-linecap="round" stroke-linejoin="round"/></svg>
<div class="t" style="left:1422.80px;top:737.52px;font-size:10.8px;font-weight:700;color:#1f2937;letter-spacing:-0.501px;font-family:'Liberation Sans', sans-serif;">YES</div>
<svg class="a" style="left:1529px;top:738.38px" width="11" height="11" viewBox="0 0 11 11"><circle cx="5.5" cy="5.5" r="5.5" fill="#1fbf5a"/><path d="M3 5.6 L4.8 7.3 L8 4" fill="none" stroke="#fff" stroke-width="1.3" stroke-linecap="round" stroke-linejoin="round"/></svg>
<div class="t" style="left:1544.80px;top:737.52px;font-size:10.8px;font-weight:700;color:#1f2937;letter-spacing:-0.501px;font-family:'Liberation Sans', sans-serif;">YES</div>
<div class="t" style="left:1651.30px;top:713.95px;font-size:11.2px;font-weight:700;color:#111827;letter-spacing:-0.219px;font-family:'Liberation Sans', sans-serif;">31% OPENED</div>
<div class="a" style="left:1651px;top:727.88px;width:99px;height:7.8px;border-radius:4px;background:#e5e7eb;overflow:hidden"><div style="width:31%;height:100%;border-radius:4px;background:#eeb007"></div></div>
<div class="t" style="left:1651.30px;top:752.05px;font-size:11.2px;font-weight:700;color:#111827;letter-spacing:-0.244px;font-family:'Liberation Sans', sans-serif;">23% CLICKED</div>
<div class="a" style="left:1651px;top:765.88px;width:99px;height:7.8px;border-radius:4px;background:#e5e7eb;overflow:hidden"><div style="width:23%;height:100%;border-radius:4px;background:#eeb007"></div></div>
<div class="a" style="left:1773px;top:727.88px;width:37.5px;height:30.5px;border-radius:5px;border:1px solid #cfd3d9;background:#fff;box-shadow:0 1px 2px rgba(0,0,0,.1)"></div>
<svg class="a" style="left:1785px;top:740.88px" width="13" height="4" viewBox="0 0 13 4"><circle cx="2" cy="2" r="1.6" fill="#111"/><circle cx="6.5" cy="2" r="1.6" fill="#111"/><circle cx="11" cy="2" r="1.6" fill="#111"/></svg>
<div class="a" style="left:206px;top:786.28px;width:1617px;height:84.86px;background:#f3f4f6"></div>
<div class="a" style="left:206px;top:870.14px;width:1617px;height:1px;background:#e5e7eb"></div>
<svg class="av" style="left:229.40px;top:805.08px" width="45.40" height="45.40" viewBox="0 0 46 46"><defs><clipPath id="cp7"><circle cx="23" cy="23" r="23"/></clipPath><filter id="bl7" x="-5%" y="-5%" width="110%" height="110%"><feGaussianBlur stdDeviation="0.55"/></filter></defs><g clip-path="url(#cp7)"><g filter="url(#bl7)"><rect width="46" height="46" fill="#c08a62"/><rect width="12" height="46" fill="#a3653e"/><rect x="8" y="14" width="6" height="14" fill="#e8c08e"/><rect x="34" width="12" height="46" fill="#8a6a5c"/><rect x="35" y="8" width="6" height="6" fill="#c0404a"/><rect x="34" y="26" width="12" height="20" fill="#3a3838"/><path d="M13 30 Q11 5 24 4 Q37 5 35 28 L31 27 Q33 12 24 12 Q15 12 17 29Z" fill="#161314"/><rect x="21" y="25" width="6" height="8" fill="#d8a88e"/><ellipse cx="24" cy="19" rx="7.8" ry="9.8" fill="#e4b79c"/><path d="M16 16 Q18 7 26 8 Q31 9 32 15 Q26 10 16 16Z" fill="#161314"/><path d="M3 41 Q10 32 18 31 L22 46 L5 46Z" fill="#1b1e29"/><path d="M30 30 Q38 32 43 40 L41 46 L24 46Z" fill="#1b1e29"/><path d="M18 31 L30 30 L26 46 L22 46Z" fill="#e7f0f0"/><path d="M22 35 L25 35 L24 46 L20 46Z" fill="#3a2a30"/><g fill="#1e1414"><ellipse cx="20.7" cy="18.5" rx="1.1" ry="0.7"/><ellipse cx="27.5" cy="18.5" rx="1.1" ry="0.7"/></g><path d="M20.5 23.5 Q24 26.5 27.5 23.5" stroke="#b04a50" stroke-width="1.3" fill="#fff"/></g></g></svg>
<div class="t" style="left:305.20px;top:811.13px;font-size:13.6px;font-weight:700;color:#2d3748;letter-spacing:-0.386px;font-family:'Liberation Sans', sans-serif;">Asami Miyamoto</div>
<div class="t" style="left:305.20px;top:831.19px;font-size:13.2px;font-weight:400;color:#6b7280;letter-spacing:0.052px;font-family:'Liberation Sans', sans-serif;">asami.miyamoto@gmail.com</div>
<div class="a" style="left:614px;top:820.74px;width:64px;height:17px;border-radius:9px;border:1.3px solid #5d8fe0;background:#e3eefc"></div>
<div class="t" style="left:622.90px;top:823.54px;font-size:11px;font-weight:700;color:#1a5ce0;letter-spacing:-0.173px;font-family:'Liberation Sans', sans-serif;">Prospect</div>
<div class="t" style="left:1009.80px;top:820.17px;font-size:14px;font-weight:400;color:#4b5563;letter-spacing:-0.174px;font-family:'Liberation Sans', sans-serif;">Lead Architect (Tokyo Development Group)</div>
<svg class="a" style="left:1407px;top:823.24px" width="11" height="11" viewBox="0 0 11 11"><circle cx="5.5" cy="5.5" r="5.5" fill="#9ca3af"/><path d="M3.8 3.8 L7.2 7.2 M7.2 3.8 L3.8 7.2" fill="none" stroke="#fff" stroke-width="1.2" stroke-linecap="round"/></svg>
<div class="t" style="left:1422.80px;top:822.09px;font-size:11.3px;font-weight:700;color:#9ca3af;letter-spacing:-0.158px;font-family:'Liberation Sans', sans-serif;">NO</div>
<svg class="a" style="left:1529px;top:823.24px" width="11" height="11" viewBox="0 0 11 11"><circle cx="5.5" cy="5.5" r="5.5" fill="#9ca3af"/><path d="M3.8 3.8 L7.2 7.2 M7.2 3.8 L3.8 7.2" fill="none" stroke="#fff" stroke-width="1.2" stroke-linecap="round"/></svg>
<div class="t" style="left:1544.80px;top:822.09px;font-size:11.3px;font-weight:700;color:#9ca3af;letter-spacing:-0.158px;font-family:'Liberation Sans', sans-serif;">NO</div>
<div class="t" style="left:1651.30px;top:798.81px;font-size:11.2px;font-weight:700;color:#111827;letter-spacing:-0.214px;font-family:'Liberation Sans', sans-serif;">100% OPENED</div>
<div class="a" style="left:1651px;top:812.74px;width:99px;height:7.8px;border-radius:4px;background:#e5e7eb;overflow:hidden"><div style="width:100%;height:100%;border-radius:4px;background:#16c24f"></div></div>
<div class="t" style="left:1651.30px;top:836.91px;font-size:11.2px;font-weight:700;color:#111827;letter-spacing:-0.249px;font-family:'Liberation Sans', sans-serif;">0% CLICKED</div>
<div class="a" style="left:1651px;top:850.74px;width:99px;height:7.8px;border-radius:4px;background:#e5e7eb;overflow:hidden"><div style="width:0%;height:100%;border-radius:4px;background:#eeb007"></div></div>
<div class="a" style="left:1773px;top:812.74px;width:37.5px;height:30.5px;border-radius:5px;border:1px solid #cfd3d9;background:#fff;box-shadow:0 1px 2px rgba(0,0,0,.1)"></div>
<svg class="a" style="left:1785px;top:825.74px" width="13" height="4" viewBox="0 0 13 4"><circle cx="2" cy="2" r="1.6" fill="#111"/><circle cx="6.5" cy="2" r="1.6" fill="#111"/><circle cx="11" cy="2" r="1.6" fill="#111"/></svg>
<div class="a" style="left:206px;top:955.00px;width:1617px;height:1px;background:#e5e7eb"></div>
<svg class="av" style="left:229.40px;top:889.94px" width="45.40" height="45.40" viewBox="0 0 46 46"><defs><clipPath id="cp8"><circle cx="23" cy="23" r="23"/></clipPath><filter id="bl8" x="-5%" y="-5%" width="110%" height="110%"><feGaussianBlur stdDeviation="0.55"/></filter></defs><g clip-path="url(#cp8)"><g filter="url(#bl8)"><rect width="46" height="46" fill="#dfe4e2"/><rect width="14" height="46" fill="#aab6b2"/><rect x="2" y="16" width="10" height="4" fill="#b8c890"/><rect x="38" y="8" width="8" height="38" fill="#9fb0b8"/><rect x="39" y="26" width="3" height="10" fill="#7bc069"/><ellipse cx="24.5" cy="15" rx="13" ry="11.5" fill="#1d1814"/><ellipse cx="24.5" cy="25" rx="11" ry="13" fill="#a87058"/><path d="M10.5 21 Q9 4 24 3 Q38 4 38 20 L35.5 16 Q28 10 20 12 Q13 13 12.5 21Z" fill="#1d1814"/><g fill="none" stroke="#3a2840" stroke-width="1.5"><rect x="13" y="19" width="8.5" height="5"/><rect x="23.5" y="19" width="9" height="5"/></g><rect x="23.5" y="19" width="9" height="5" fill="#5a3a8a" opacity=".45"/><path d="M12 46 Q14 38 22 37 L30 36 Q37 37 40 46Z" fill="#161616"/><g fill="#1a1010"><ellipse cx="17.3" cy="21.5" rx="1.2" ry="0.9"/><ellipse cx="28" cy="21.5" rx="1.2" ry="0.9"/></g><path d="M19.5 30 Q24.5 29 29.5 30" stroke="#3a241c" stroke-width="1.1" fill="none"/><path d="M15 31 Q17 38 24.5 38 Q32 38 34 31" stroke="#3a2a22" stroke-width="1.4" fill="none" opacity=".5"/></g></g></svg>
<div class="t" style="left:305.20px;top:895.99px;font-size:13.6px;font-weight:700;color:#2d3748;letter-spacing:-0.584px;font-family:'Liberation Sans', sans-serif;">Daniel Singh</div>
<div class="t" style="left:305.20px;top:916.05px;font-size:13.2px;font-weight:400;color:#6b7280;letter-spacing:-0.009px;font-family:'Liberation Sans', sans-serif;">daniel.singh@gmail.com</div>
<div class="a" style="left:614px;top:905.59px;width:64px;height:17px;border-radius:9px;border:1.3px solid #5d8fe0;background:#e3eefc"></div>
<div class="t" style="left:622.90px;top:908.40px;font-size:11px;font-weight:700;color:#1a5ce0;letter-spacing:-0.173px;font-family:'Liberation Sans', sans-serif;">Prospect</div>
<div class="t" style="left:1009.80px;top:905.02px;font-size:14px;font-weight:400;color:#4b5563;letter-spacing:-0.040px;font-family:'Liberation Sans', sans-serif;">Head of Product (Majentify)</div>
<svg class="a" style="left:1407px;top:908.09px" width="11" height="11" viewBox="0 0 11 11"><circle cx="5.5" cy="5.5" r="5.5" fill="#9ca3af"/><path d="M3.8 3.8 L7.2 7.2 M7.2 3.8 L3.8 7.2" fill="none" stroke="#fff" stroke-width="1.2" stroke-linecap="round"/></svg>
<div class="t" style="left:1422.80px;top:906.95px;font-size:11.3px;font-weight:700;color:#9ca3af;letter-spacing:-0.158px;font-family:'Liberation Sans', sans-serif;">NO</div>
<svg class="a" style="left:1529px;top:908.09px" width="11" height="11" viewBox="0 0 11 11"><circle cx="5.5" cy="5.5" r="5.5" fill="#9ca3af"/><path d="M3.8 3.8 L7.2 7.2 M7.2 3.8 L3.8 7.2" fill="none" stroke="#fff" stroke-width="1.2" stroke-linecap="round"/></svg>
<div class="t" style="left:1544.80px;top:906.95px;font-size:11.3px;font-weight:700;color:#9ca3af;letter-spacing:-0.158px;font-family:'Liberation Sans', sans-serif;">NO</div>
<div class="t" style="left:1651.30px;top:883.67px;font-size:11.2px;font-weight:700;color:#111827;letter-spacing:-0.214px;font-family:'Liberation Sans', sans-serif;">100% OPENED</div>
<div class="a" style="left:1651px;top:897.59px;width:99px;height:7.8px;border-radius:4px;background:#e5e7eb;overflow:hidden"><div style="width:100%;height:100%;border-radius:4px;background:#16c24f"></div></div>
<div class="t" style="left:1651.30px;top:921.77px;font-size:11.2px;font-weight:700;color:#111827;letter-spacing:-0.249px;font-family:'Liberation Sans', sans-serif;">0% CLICKED</div>
<div class="a" style="left:1651px;top:935.59px;width:99px;height:7.8px;border-radius:4px;background:#e5e7eb;overflow:hidden"><div style="width:0%;height:100%;border-radius:4px;background:#eeb007"></div></div>
<div class="a" style="left:1773px;top:897.59px;width:37.5px;height:30.5px;border-radius:5px;border:1px solid #cfd3d9;background:#fff;box-shadow:0 1px 2px rgba(0,0,0,.1)"></div>
<svg class="a" style="left:1785px;top:910.59px" width="13" height="4" viewBox="0 0 13 4"><circle cx="2" cy="2" r="1.6" fill="#111"/><circle cx="6.5" cy="2" r="1.6" fill="#111"/><circle cx="11" cy="2" r="1.6" fill="#111"/></svg>
<div class="a" style="left:206px;top:956.00px;width:1617px;height:10px;background:#f3f4f6"></div>
</body></html>
